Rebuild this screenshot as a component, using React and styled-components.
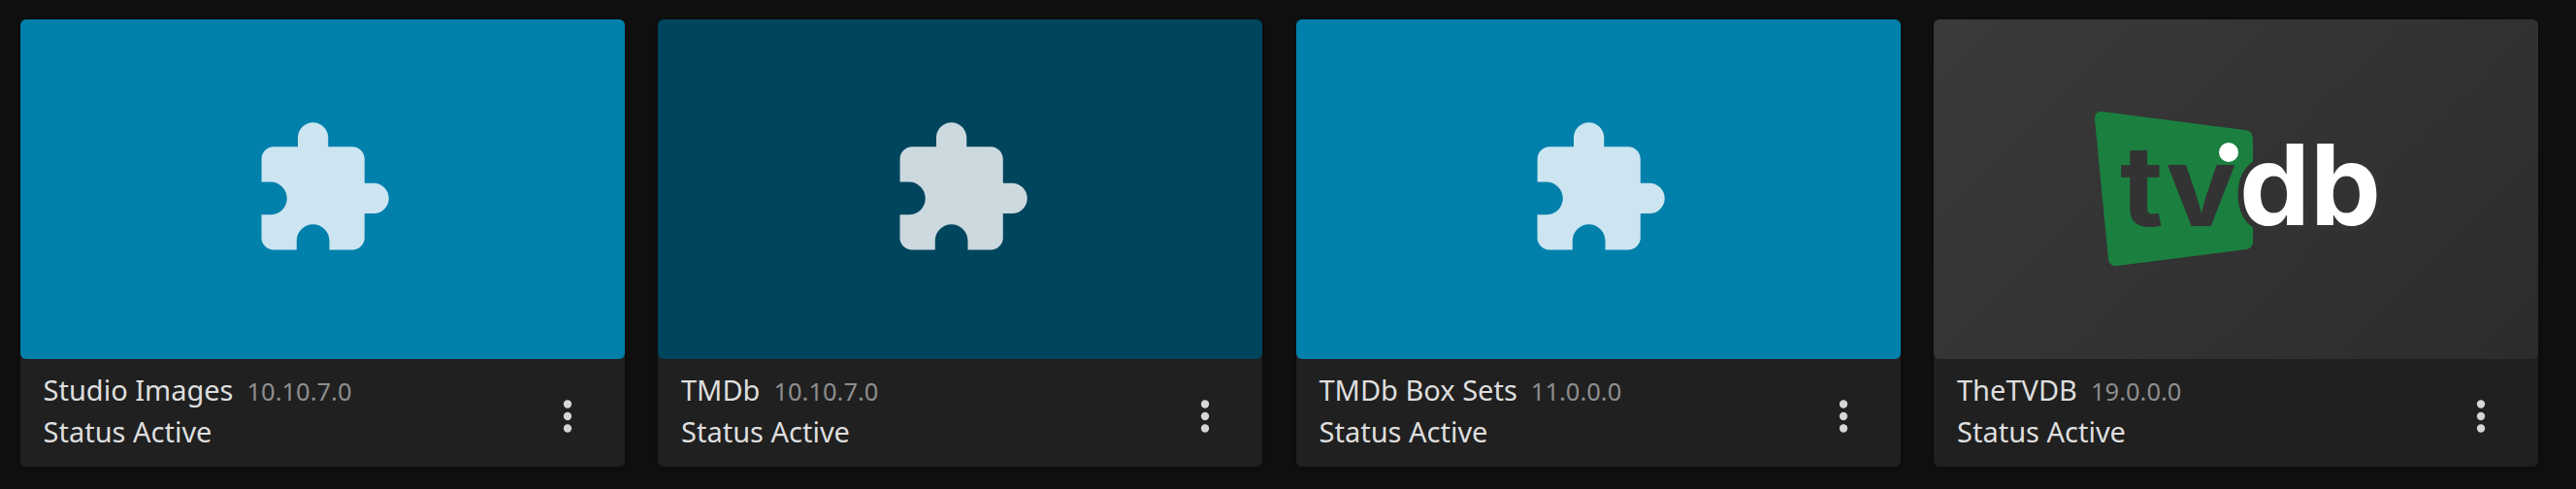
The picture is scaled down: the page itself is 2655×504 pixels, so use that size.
import React from 'react';
import styled, { createGlobalStyle } from 'styled-components';

const plugins = [
  { name: 'Studio Images', version: '10.10.7.0', bg: '#0080ab', fill: '#cce5f1' },
  { name: 'TMDb', version: '10.10.7.0', bg: '#00455e', fill: '#ccd9df' },
  { name: 'TMDb Box Sets', version: '11.0.0.0', bg: '#0080ab', fill: '#cce5f1' },
  { name: 'TheTVDB', version: '19.0.0.0', bg: 'linear-gradient(135deg, #3a3a3a 0%, #2c2c2c 100%)', logo: true },
];

const App = () => {
  return (
    <>
      <GlobalStyle />
      <Page>
        {plugins.map((p) => (
          <Card key={p.name}>
            <Cover $bg={p.bg}>
              {p.logo ? <TvdbLogo /> : <PuzzleIcon fill={p.fill} />}
            </Cover>
            <Footer>
              <Info>
                <NameRow>
                  {p.name}
                  <Version>{p.version}</Version>
                </NameRow>
                <Status>Status Active</Status>
              </Info>
              <MenuButton aria-label="More">
                <svg viewBox="0 0 24 24" width="50" height="50" fill="#d6d6d6">
                  <circle cx="12" cy="6" r="2" />
                  <circle cx="12" cy="12" r="2" />
                  <circle cx="12" cy="18" r="2" />
                </svg>
              </MenuButton>
            </Footer>
          </Card>
        ))}
      </Page>
    </>
  );
};

const PuzzleIcon = ({ fill }) => (
  <svg viewBox="0 0 24 24" width="150" height="150" fill={fill}>
    <path d="M20.5 11H19V7c0-1.1-.9-2-2-2h-4V3.5C13 2.12 11.88 1 10.5 1S8 2.12 8 3.5V5H4c-1.1 0-1.99.9-1.99 2v3.8H3.5c1.49 0 2.7 1.21 2.7 2.7s-1.21 2.7-2.7 2.7H2V20c0 1.1.9 2 2 2h3.8v-1.5c0-1.49 1.21-2.7 2.7-2.7 1.49 0 2.7 1.21 2.7 2.7V22H17c1.1 0 2-.9 2-2v-4h1.5c1.38 0 2.5-1.12 2.5-2.5S21.88 11 20.5 11z" />
  </svg>
);

const TvdbLogo = () => (
  <svg viewBox="0 0 292 160" width="292" height="160">
    <path
      d="M8 0 L155 19 Q163 20 163 28 L163 134 Q163 141 156 142 L23 159 Q15 160 14 152 L0 8 Q0 -1 8 0 Z"
      fill="#1b7f40"
    />
    <LogoText x="26" y="118" fill="#333333" textLength="120" lengthAdjust="spacingAndGlyphs">tv</LogoText>
    <LogoText
      x="149"
      y="117"
      fill="#ffffff"
      stroke="#333333"
      strokeWidth="12"
      paintOrder="stroke"
      textLength="146"
      lengthAdjust="spacingAndGlyphs"
    >
      db
    </LogoText>
    <circle cx="138" cy="42" r="10" fill="#ffffff" />
  </svg>
);

const GlobalStyle = createGlobalStyle`
  html, body {
    margin: 0;
    background: #101010;
  }
`;

const Page = styled.div`
  width: 2655px;
  height: 504px;
  box-sizing: border-box;
  padding: 20px 39px 0 20.5px;
  display: grid;
  grid-template-columns: repeat(4, 1fr);
  column-gap: 34.5px;
  align-items: start;
  font-family: 'Noto Sans', sans-serif;
`;

const Card = styled.div`
  height: 461px;
  display: flex;
  flex-direction: column;
  background: #202020;
  border-radius: 6px;
  box-shadow: 0 2px 8px 0 rgba(0, 0, 0, 0.37);
`;

const Cover = styled.div`
  height: 350px;
  display: flex;
  align-items: center;
  justify-content: center;
  background: ${(p) => p.$bg};
  border-radius: 6px;
`;

const Footer = styled.div`
  flex: 1;
  display: flex;
  align-items: flex-start;
  justify-content: space-between;
  padding: 13px 34px 0 24px;
`;

const Info = styled.div`
  display: flex;
  flex-direction: column;
  gap: 4px;
`;

const NameRow = styled.div`
  display: flex;
  align-items: baseline;
  font-size: 29px;
  line-height: 38px;
  color: #dedede;
`;

const Version = styled.span`
  margin-left: 14px;
  font-size: 25.5px;
  color: #8e8e8e;
`;

const Status = styled.div`
  font-size: 29px;
  line-height: 38px;
  color: #dedede;
`;

const MenuButton = styled.button`
  display: flex;
  margin-top: 21px;
  padding: 0;
  border: 0;
  background: none;
`;

const LogoText = styled.text`
  font-family: 'Inter', sans-serif;
  font-weight: 700;
  font-size: 115px;
`;

export default App;
